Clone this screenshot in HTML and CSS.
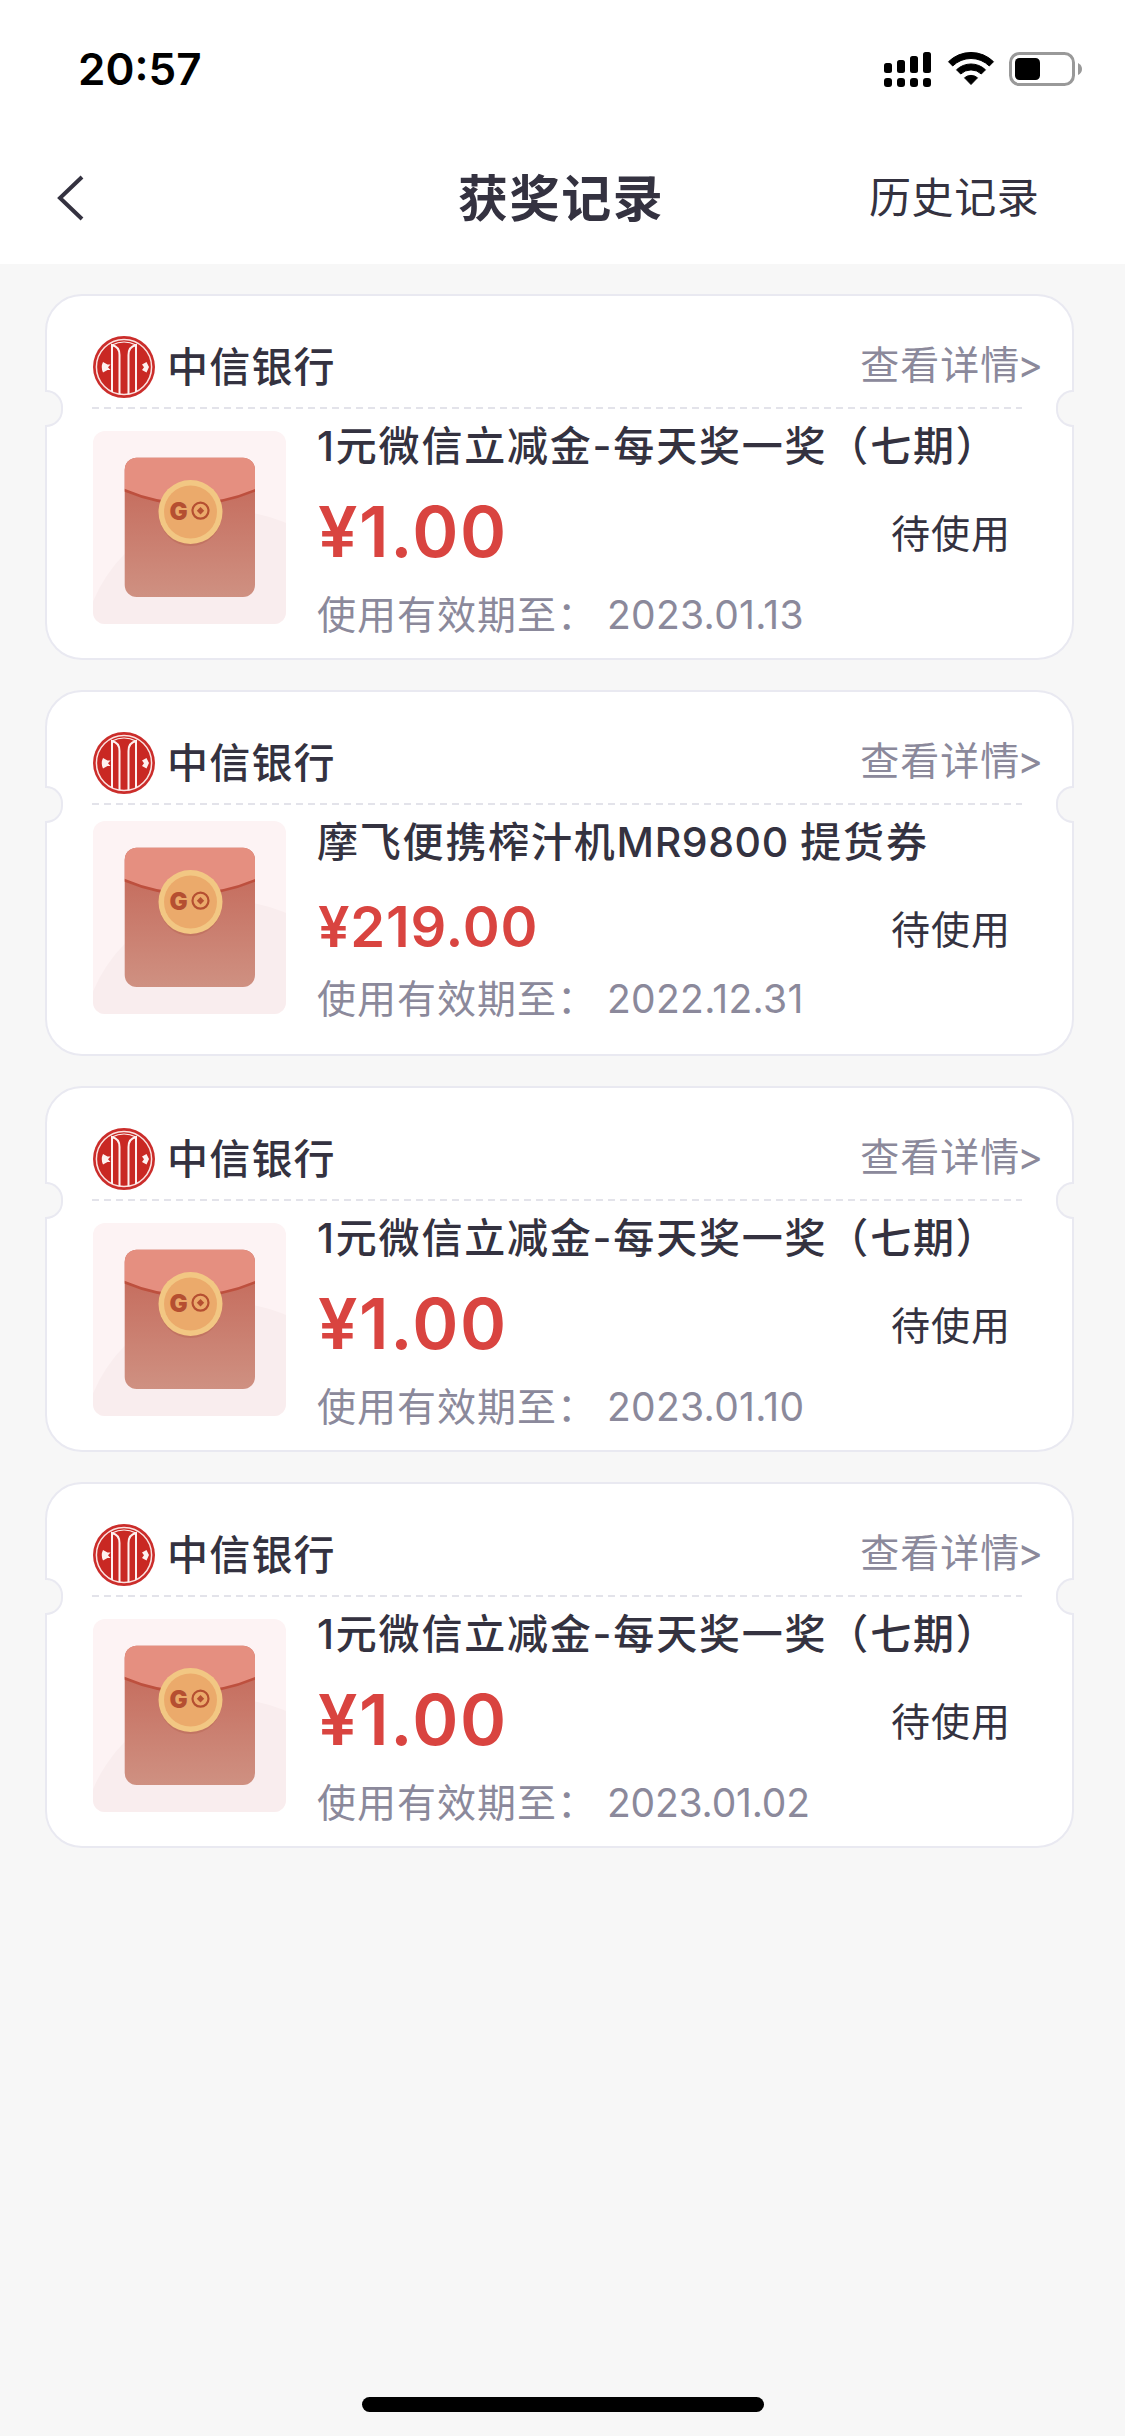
FILE: index.html
```html
<!DOCTYPE html>
<html lang="zh-CN">
<head>
<meta charset="utf-8">
<title>获奖记录</title>
<link rel="stylesheet" href="styles.css">
</head>
<body>
<svg class="defs" width="0" height="0" aria-hidden="true">
  <defs>
    <linearGradient id="pocket" x1="0" y1="0" x2="0" y2="1">
      <stop offset="0.25" stop-color="#c66f60"/>
      <stop offset="1" stop-color="#cf9182"/>
    </linearGradient>
    <clipPath id="tile"><rect width="193" height="193" rx="12"/></clipPath>
    <clipPath id="envelope"><rect x="31.7" y="26.7" width="130.3" height="139.3" rx="12"/></clipPath>
  </defs>
  <symbol id="bank" viewBox="0 0 62 62">
    <circle cx="31" cy="31" r="31" fill="#cb2d2b"/>
    <circle cx="31" cy="31" r="27.6" fill="#c92823" stroke="#fbe3e1" stroke-width="1.5"/>
    <g fill="none" stroke="#fdf1f0" stroke-width="2">
      <path d="M19 56V9C23.500 10 26.500 13.500 26.500 19V58.300"/>
      <path d="M43 56V9C38.500 10 35.500 13.500 35.500 19V58.300"/>
      <path d="M19 9Q31 3 43 9" stroke-width="1.2"/>
    </g>
    <path d="M17.500 28.500H14.500L10 26Q7.500 31 10 36.500L14.500 34H17.500L15 31.200ZM56 31L53.500 26L49 28.500L51 31.200L49 34L53.500 36.500Z" fill="#fdf1f0"/>
  </symbol>
  <symbol id="packet" viewBox="0 0 193 193">
    <g clip-path="url(#tile)">
      <rect width="193" height="193" fill="#fdf3f4"/>
      <circle cx="135" cy="226" r="146" fill="#f9edee"/>
    </g>
    <g clip-path="url(#envelope)">
      <rect x="31" y="26" width="132" height="141" fill="url(#pocket)"/>
      <path d="M31 26H163V58.500Q97 87 31 58.500Z" fill="#e58f80"/>
      <path d="M31 59Q97 87 163 59" fill="none" stroke="#bd503e" stroke-width="2.600"/>
    </g>
    <circle cx="97.500" cy="84" r="31" fill="#b56552" opacity="0.45"/>
    <circle cx="97.500" cy="81" r="32" fill="#f2c783"/>
    <circle cx="97.500" cy="81" r="26.500" fill="#ebaa6b"/>
    <circle cx="107.500" cy="79.700" r="8" fill="none" stroke="#b54f31" stroke-width="2.200"/>
    <path d="M107.500 76L111.200 79.700L107.500 83.400L103.800 79.700Z" fill="#b54f31"/>
  </symbol>
</svg>

<header class="top">
  <div class="status-bar">
    <span class="clock">20:57</span>
    <svg class="indicators" width="200" height="36" viewBox="0 0 200 36">
      <rect x="0" y="11" width="8" height="10" rx="2.500"/>
      <rect x="13" y="8" width="8" height="13" rx="2.500"/>
      <rect x="26" y="4" width="8" height="17" rx="2.500"/>
      <rect x="39" y="0" width="8" height="21" rx="2.500"/>
      <rect x="0" y="26" width="8" height="9" rx="3"/>
      <rect x="13" y="26" width="8" height="9" rx="3"/>
      <rect x="26" y="26" width="8" height="9" rx="3"/>
      <rect x="39" y="26" width="8" height="9" rx="3"/>
      <path d="M64.500 9.700A32 32 0 0 1 109.500 9.700L105.300 14A26 26 0 0 0 68.700 14Z" stroke="#000" stroke-width="1" stroke-linejoin="round"/>
      <path d="M72.500 17.800A21 21 0 0 1 101.500 17.800L97.300 22A15 15 0 0 0 76.700 22Z" stroke="#000" stroke-width="1" stroke-linejoin="round"/>
      <path d="M80.500 25.800A10 10 0 0 1 93.500 25.800L87 32.500Z" stroke="#000" stroke-width="1" stroke-linejoin="round"/>
      <rect x="126.500" y="1.500" width="63" height="31" rx="9" fill="none" stroke="#999" stroke-width="3"/>
      <rect x="131" y="6" width="25" height="22" rx="4.500"/>
      <path d="M194 11Q198 13 198 17T194 23Z" fill="#999"/>
    </svg>
  </div>
  <nav class="nav">
    <svg class="back" width="30" height="48" viewBox="0 0 30 48"><path d="M26 3L4 24L26 45" fill="none" stroke="#343240" stroke-width="4"/></svg>
    <h1 class="title">获奖记录</h1>
    <a class="history">历史记录</a>
  </nav>
</header>

<main class="list">
  <article class="card">
    <div class="card-head"><svg class="logo"><use href="#bank"/></svg><span class="bank">中信银行</span><a class="detail">查看详情<span class="arrow">&gt;</span></a></div>
    <div class="divider"></div>
    <div class="card-body">
      <svg class="thumb" viewBox="0 0 193 193"><use href="#packet"/><text class="coin-letter" x="76.500" y="89">G</text></svg>
      <div class="info">
        <h2 class="name">1元微信立减金-每天奖一奖（七期）</h2>
        <div class="row"><span class="price">¥1.00</span><span class="state">待使用</span></div>
        <div class="expiry"><span class="label">使用有效期至：</span><span class="date">2023.01.13</span></div>
      </div>
    </div>
  </article>
  <article class="card">
    <div class="card-head"><svg class="logo"><use href="#bank"/></svg><span class="bank">中信银行</span><a class="detail">查看详情<span class="arrow">&gt;</span></a></div>
    <div class="divider"></div>
    <div class="card-body">
      <svg class="thumb" viewBox="0 0 193 193"><use href="#packet"/><text class="coin-letter" x="76.500" y="89">G</text></svg>
      <div class="info">
        <h2 class="name">摩飞便携榨汁机<span class="model">MR9800 </span>提货券</h2>
        <div class="row row-compact"><span class="price price-small">¥219.00</span><span class="state">待使用</span></div>
        <div class="expiry"><span class="label">使用有效期至：</span><span class="date">2022.12.31</span></div>
      </div>
    </div>
  </article>
  <article class="card">
    <div class="card-head"><svg class="logo"><use href="#bank"/></svg><span class="bank">中信银行</span><a class="detail">查看详情<span class="arrow">&gt;</span></a></div>
    <div class="divider"></div>
    <div class="card-body">
      <svg class="thumb" viewBox="0 0 193 193"><use href="#packet"/><text class="coin-letter" x="76.500" y="89">G</text></svg>
      <div class="info">
        <h2 class="name">1元微信立减金-每天奖一奖（七期）</h2>
        <div class="row"><span class="price">¥1.00</span><span class="state">待使用</span></div>
        <div class="expiry"><span class="label">使用有效期至：</span><span class="date">2023.01.10</span></div>
      </div>
    </div>
  </article>
  <article class="card">
    <div class="card-head"><svg class="logo"><use href="#bank"/></svg><span class="bank">中信银行</span><a class="detail">查看详情<span class="arrow">&gt;</span></a></div>
    <div class="divider"></div>
    <div class="card-body">
      <svg class="thumb" viewBox="0 0 193 193"><use href="#packet"/><text class="coin-letter" x="76.500" y="89">G</text></svg>
      <div class="info">
        <h2 class="name">1元微信立减金-每天奖一奖（七期）</h2>
        <div class="row"><span class="price">¥1.00</span><span class="state">待使用</span></div>
        <div class="expiry"><span class="label">使用有效期至：</span><span class="date date-wide">2023.01.02</span></div>
      </div>
    </div>
  </article>
</main>
<footer class="home"><div class="home-bar"></div></footer>
</body>
</html>
```
FILE: styles.css
```css
* { box-sizing: border-box; }

body {
  margin: 0;
  height: 2436px;
  display: flex;
  flex-direction: column;
  background: #f7f7f7;
  color: #343240;
  font-family: Inter, "Noto Sans CJK SC", sans-serif;
  white-space: nowrap;
}

.defs { position: absolute; }

.coin-letter {
  font-family: Inter, sans-serif;
  font-size: 24px;
  font-weight: 900;
  fill: #b54f31;
}

h1, h2 { margin: 0; font-weight: 500; }

.top { height: 264px; background: #fff; }

.status-bar {
  height: 132px;
  padding: 52px 41px 0 78px;
  display: flex;
  justify-content: space-between;
  color: #000;
}

.clock {
  font-size: 44px;
  line-height: 34px;
  font-weight: 600;
}

.nav {
  height: 132px;
  padding: 0 87px 0 56px;
  display: grid;
  grid-template-columns: 200px 1fr 169px;
  align-items: center;
}

.title {
  padding: 2px 0 0 202px;
  font-size: 50px;
  line-height: 60px;
  font-weight: 700;
  letter-spacing: 1.6px;
}

.history { font-size: 42px; line-height: 60px; letter-spacing: 0.6px; }

.list {
  flex: 1;
  padding: 30px 51px 0 45px;
  display: flex;
  flex-direction: column;
  gap: 30px;
}

.card {
  position: relative;
  height: 366px;
  padding: 40px 28px 0 46px;
  background: #fff;
  border: 2px solid #e9e9f1;
  border-radius: 37px;
}

.card::before,
.card::after {
  content: "";
  position: absolute;
  top: 94px;
  width: 16px;
  height: 33px;
  background: #f7f7f7;
  border: 2px solid #e9e9f1;
}

.card::before { left: -2px; border-left: 0; border-radius: 0 17px 17px 0; }
.card::after { right: -2px; border-right: 0; border-radius: 17px 0 0 17px; }

.card-head { height: 62px; display: flex; align-items: center; }

.logo { width: 62px; height: 62px; }

.bank {
  margin: -1px 0 0 12px;
  font-size: 41px;
  font-weight: 500;
  line-height: 60px;
  letter-spacing: 1.2px;
}

.detail {
  margin: -5px 0 0 auto;
  color: #8b899b;
  font-size: 39px;
  line-height: 60px;
  letter-spacing: 1px;
}

.arrow { margin-left: -3px; }

.divider {
  width: 930px;
  height: 2px;
  margin: 9px 0 0 -1px;
  background: repeating-linear-gradient(90deg, #e3e3ea 0 7px, transparent 7px 12px);
}

.card-body {
  padding-top: 11px;
  display: flex;
  align-items: center;
  gap: 31px;
}

.thumb { width: 193px; height: 193px; flex: none; }

.info { width: 696px; }

.name { font-size: 41px; line-height: 52px; letter-spacing: 1.8px; }

.model { letter-spacing: 0.6px; }

.row {
  height: 123px;
  display: flex;
  align-items: flex-start;
  justify-content: space-between;
}

.row-compact { height: 111px; }

.price {
  padding-left: 1px;
  color: #d94440;
  font-size: 70px;
  line-height: 120px;
  font-weight: 600;
  letter-spacing: 1.6px;
}

.price-small { font-size: 56px; line-height: 118px; letter-spacing: 0.8px; }

.state {
  margin: 2px 2px 0 0;
  font-size: 39px;
  line-height: 120px;
  letter-spacing: 1px;
}

.expiry {
  display: flex;
  color: #8b899b;
  font-size: 39px;
  line-height: 40px;
}

.label { width: 290px; letter-spacing: 1px; }

.date { letter-spacing: 0.3px; }

.date-wide { letter-spacing: -0.2px; }

.home { height: 39px; display: flex; justify-content: center; }

.home-bar { width: 402px; height: 15px; border-radius: 8px; background: #000; }
```
